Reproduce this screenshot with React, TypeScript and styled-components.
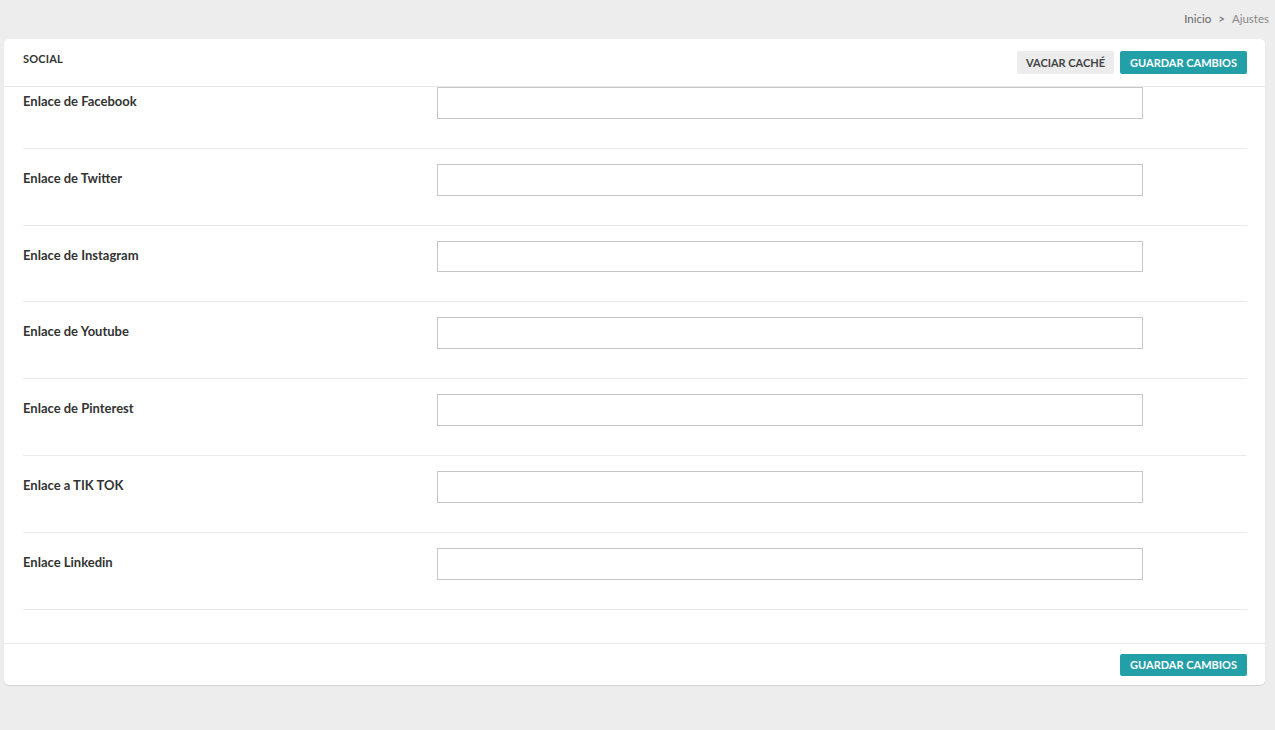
import React from "react";
import styled, { createGlobalStyle } from "styled-components";

const Global = createGlobalStyle`
  html, body { margin: 0; padding: 0; background: #ededed; }
  body { font-family: "Lato", "Open Sans", sans-serif; color: #333; }
  * { box-sizing: border-box; }
`;

const Page = styled.div`
  padding: 0 10px 0 4px;
  min-height: 730px;
`;

const Breadcrumb = styled.div`
  display: flex;
  justify-content: flex-end;
  align-items: center;
  gap: 7px;
  height: 39px;
  padding-bottom: 3px;
  font-size: 11.5px;
  font-weight: 400;
  margin-right: -4px;
`;

const Crumb = styled.span<{ $active?: boolean }>`
  color: ${(p) => (p.$active ? "#888" : "#666")};
`;

const Card = styled.div`
  background: #fff;
  border-radius: 5px;
  box-shadow: 0 1px 1px rgba(0, 0, 0, 0.12);
`;

const CardHeader = styled.div`
  display: flex;
  justify-content: space-between;
  align-items: flex-start;
  height: 48px;
  padding: 12px 18px 0 19px;
  border-bottom: 1px solid #eaeaea;
`;

const Title = styled.h2`
  margin: 1px 0 0;
  font-size: 11px;
  font-weight: 700;
  color: #333;
  letter-spacing: 0.2px;
`;

const Actions = styled.div`
  display: flex;
  gap: 6px;
`;

const Button = styled.button<{ $primary?: boolean; $small?: boolean }>`
  height: ${(p) => (p.$small ? "22px" : "23px")};
  padding: 0 ${(p) => (p.$primary ? "10px" : "9px")};
  border: none;
  border-radius: 2px;
  font-family: inherit;
  font-size: 11px;
  font-weight: 700;
  text-transform: uppercase;
  cursor: pointer;
  background: ${(p) => (p.$primary ? "#239fa8" : "#ececec")};
  color: ${(p) => (p.$primary ? "#fff" : "#444")};
`;

const Body = styled.div`
  padding: 0 18px 33px 19px;
`;

const Row = styled.div<{ $first?: boolean }>`
  display: grid;
  grid-template-columns: 414px 706px;
  align-items: start;
  padding: ${(p) => (p.$first ? "0" : "15px")} 0 29px;
  border-bottom: 1px solid #eaeaea;
`;

const Label = styled.label`
  font-size: 13px;
  font-weight: 700;
  color: #333;
  line-height: 32px;
  margin-top: -2px;
`;

const Input = styled.input`
  height: 31.8px;
  border: 1px solid #c6c6c6;
  background: #fff;
  padding: 0 8px;
  font-family: inherit;
  font-size: 13px;
  outline: none;
`;

const Footer = styled.div`
  display: flex;
  justify-content: flex-end;
  padding: 10px 18px 9px;
  border-top: 1px solid #eaeaea;
`;

const fields = [
  "Enlace de Facebook",
  "Enlace de Twitter",
  "Enlace de Instagram",
  "Enlace de Youtube",
  "Enlace de Pinterest",
  "Enlace a TIK TOK",
  "Enlace Linkedin",
];

export default function App() {
  return (
    <Page>
      <Global />
      <Breadcrumb>
        <Crumb>Inicio</Crumb>
        <Crumb>&gt;</Crumb>
        <Crumb $active>Ajustes</Crumb>
      </Breadcrumb>
      <Card>
        <CardHeader>
          <Title>SOCIAL</Title>
          <Actions>
            <Button>Vaciar caché</Button>
            <Button $primary>Guardar cambios</Button>
          </Actions>
        </CardHeader>
        <Body>
          {fields.map((f, i) => (
            <Row key={f} $first={i === 0}>
              <Label>{f}</Label>
              <Input type="text" />
            </Row>
          ))}
        </Body>
        <Footer>
          <Button $primary $small>Guardar cambios</Button>
        </Footer>
      </Card>
    </Page>
  );
}
